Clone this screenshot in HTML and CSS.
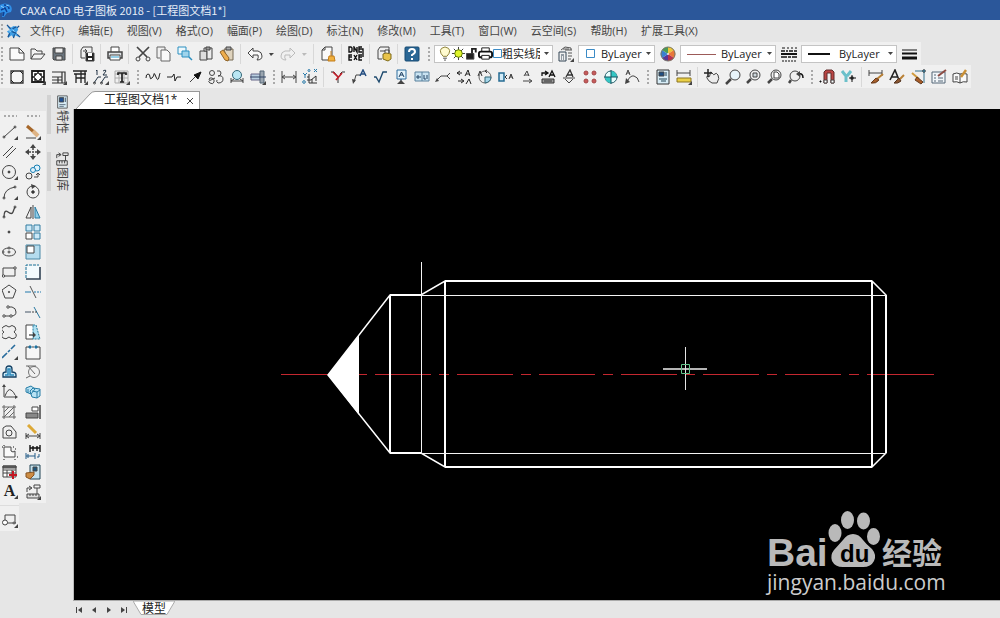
FILE: index.html
```html
<!DOCTYPE html>
<html lang="zh-CN">
<head>
<meta charset="utf-8">
<title>CAXA CAD 电子图板 2018 - [工程图文档1*]</title>
<link rel="stylesheet" href="styles.css">
</head>
<body>
<div class="app">
  <header class="titlebar">
    <svg class="logo" viewBox="0 0 13 16"><path d="M0 3q5-3 10 0 3 3 1 7l-4 1-3 4H2l1-5-3 1z" fill="#2f8fe8" stroke="none"/><path d="M4 3q5 0 5 4M1 8l4-2 2 4M3 14l1-4" stroke="#0d3f94" stroke-width="1.500"/><path d="M1 4l3 2M6 3l3 1" stroke="#8fd0ff"/></svg>
    <h1>CAXA CAD 电子图板 2018 - [工程图文档1*]</h1>
  </header>

  <nav class="menubar" aria-label="主菜单">
    <span class="grip"></span>
    <svg class="menu-logo" viewBox="0 0 16 16"><path d="M1 2l4 2 3-2 4 1 1 3-2 3 3 5-4-2-2 3-2-3-4 3 1-5-2-2 3-2z" fill="#3f9fe6" stroke="none"/><path d="M1 1l4 4M7 5l4-2M6 8l5 2M4 10l-2 4M9 11l-1 4M14 2l-2 2M12 11l3 3" stroke="#17508f" stroke-width="1.300"/><path d="M7 6l2 2M3 7l2 1" stroke="#a9dcff"/></svg>
    <button>文件(F)</button><button>编辑(E)</button><button>视图(V)</button><button>格式(O)</button><button>幅面(P)</button><button>绘图(D)</button><button>标注(N)</button><button>修改(M)</button><button>工具(T)</button><button>窗口(W)</button><button>云空间(S)</button><button>帮助(H)</button><button>扩展工具(X)</button>
  </nav>

  <div class="toolrow">
    <div class="toolbar" role="toolbar" aria-label="标准">
      <span class="grip"></span>
      <button aria-label="新建"><svg viewBox="0 0 16 16"><path d="M1 2h9l5 5v7H1z" fill="#fafafa"/><path d="M10 2v5h5"/></svg></button>
      <button aria-label="打开"><svg viewBox="0 0 16 16"><path d="M1 13V3h4l2 2h5v3M1 13l3-5h11l-4 5z" fill="#f4f4f4"/></svg></button>
      <button aria-label="保存"><svg viewBox="0 0 16 16"><path d="M2 2h12v12H3l-1-1z" fill="#6a747d"/><path d="M4 2h8v5H4z" fill="#eee"/><path d="M5 10h6v4H5z" fill="#ddd"/></svg></button>
      <span class="sep"></span>
      <button aria-label="另存为"><svg viewBox="0 0 16 16"><path d="M4 1h9v5M4 1L2 4v8h4"/><path d="M4 5h4M6 3l2 2-2 2"/><path d="M7 7h8v8H7z" fill="#222"/><path d="M9 7h4v3H9zM9 12h4v2H9z" fill="#fff" stroke="none"/></svg></button>
      <span class="sep"></span>
      <button aria-label="打印"><svg viewBox="0 0 16 16"><path d="M4 6V1h8v5" fill="#fff"/><path d="M1 6h14v6H1z" fill="#dfe3e6" stroke-width="1.500"/><path d="M3 9h10v5H3z" fill="#fff"/><path d="M4 11h8" stroke="#2f9fd0"/></svg></button>
      <span class="sep"></span>
      <button aria-label="剪切"><svg viewBox="0 0 16 16"><path d="M2 1l10 10M14 1L4 11" stroke-width="1.700"/><circle cx="3" cy="13" r="2"/><circle cx="13" cy="13" r="2"/></svg></button>
      <button aria-label="复制"><svg viewBox="0 0 16 16"><path d="M4 12H1V1h8v3" stroke="#666"/><path d="M5 4h6l3 3v8H5z" fill="#fafafa" stroke="#666"/></svg></button>
      <button aria-label="带基点复制"><svg viewBox="0 0 16 16"><path d="M1 1h8v7H1z" fill="#eef8fc" stroke="#2b8fc0"/><path d="M5 5h7v6H5z" fill="#9fd4ec" stroke="#2b8fc0"/><path d="M12 11l3 3" stroke="#2b8fc0" stroke-width="1.500"/></svg></button>
      <button aria-label="粘贴"><svg viewBox="0 0 16 16"><path d="M2 5v9h7V5z" fill="#ddd"/><path d="M6 2h8v11H9V5H6z" fill="#ececec"/><path d="M8 1h4v3H8z" fill="#999"/></svg></button>
      <button aria-label="选择性粘贴"><svg viewBox="0 0 16 16"><path d="M5 3h9v11H8z" fill="#dfd3bd" stroke="#776a55"/><path d="M1 6l3-2 6 8-1 3-3-1z" fill="#eead4c" stroke="#8f6428"/><path d="M7 1h5v3H7z" fill="#aaa"/></svg></button>
      <span class="sep"></span>
      <button aria-label="撤销"><svg viewBox="0 0 16 16"><path d="M1 7l5-5v3h5q4 1 4 5t-5 4q2-2 1-5H6v3z" fill="#fafafa"/></svg></button>
      <button class="drop" aria-label="撤销列表"><svg viewBox="0 0 8 8"><path class="c" d="M2 3h5L4 6z"/></svg></button>
      <button aria-label="重做"><svg viewBox="0 0 16 16"><path d="M15 7l-5-5v3H5q-4 1-4 5t5 4q-2-2-1-5h5v3z" stroke="#bbb"/></svg></button>
      <button class="drop" aria-label="重做列表"><svg viewBox="0 0 8 8"><path d="M2 3h5L4 6z" fill="#bbb" stroke="none"/></svg></button>
      <span class="sep"></span>
      <button aria-label="清理"><svg viewBox="0 0 16 16"><path d="M5 1h7v13H2V4zM5 1v3H2" fill="#fafafa"/><path d="M11 5v5M9 10h5l1 5H8z" fill="#f0b03e" stroke="#c37c18"/></svg></button>
      <span class="sep"></span>
      <button aria-label="外部程序"><svg viewBox="0 0 16 16"><path d="M1 1v5h2l1-1V2L3 1zM6 6V1l3 5V1M14 1h-3v5h3M11 3h3M4 9H1v5h3M1 11h3M6 9l3 5M9 9l-3 5M14 9h-3v5h3M11 11h3M14 3h1v8" stroke="#111" stroke-width="1.400"/></svg></button>
      <span class="sep"></span>
      <button aria-label="加密"><svg viewBox="0 0 16 16"><path d="M4 1h9v6M4 1L2 4v9h4M4 5h5"/><path d="M7 8l3-1 5 1v5l-3 2-5-2z" fill="#e8c34a" stroke="#806c1a"/><path d="M9 7V4h4v3"/></svg></button>
      <span class="sep"></span>
      <button aria-label="帮助"><svg viewBox="0 0 16 16"><rect x="1" y="1" width="14" height="14" rx="1" fill="#2a6795" stroke="#164a72"/><path d="M5 6q0-3 3-3t3 3q0 1-3 3v1M8 12v2" stroke="#fff" stroke-width="2"/></svg></button>
      <span class="grip wide"></span>
      <div class="combo layer">
        <svg viewBox="0 0 12 16"><path d="M4 11q-3-3-3-6t5-4q5 1 5 4t-3 6z" fill="#fffbd0" stroke="#877b30"/><path d="M4 13h4M5 15h2"/></svg>
        <svg class="i16" viewBox="0 0 16 16"><path d="M8 1v14M1 8h14M3 3l10 10M13 3L3 13" stroke="#333"/><circle cx="8" cy="8" r="4" fill="#dff52b" stroke="#5a7500"/></svg>
        <svg viewBox="0 0 12 16"><path d="M0 8h8v6H0z" fill="#222"/><path d="M6 8V3h4v4" stroke="#222" stroke-width="2"/></svg>
        <svg class="i16" viewBox="0 0 16 16"><path d="M4 6V2h8v4" fill="#fff" stroke="#111"/><rect x="1" y="6" width="14" height="6" rx="2" fill="#fff" stroke="#111" stroke-width="2"/><path d="M4 10h8v4H4z" fill="#fff" stroke="#111"/></svg>
        <svg class="i9" viewBox="0 0 9 9"><path d="M.5.500h8v8h-8z" stroke="#3b8bc6"/></svg>
        <select aria-label="图层"><option>粗实线层</option></select>
        <svg class="arrow" viewBox="0 0 8 8"><path class="c" d="M2 2h5L4.500 5z"/></svg>
      </div>
      <button aria-label="图层设置"><svg viewBox="0 0 16 16"><path d="M1 6h7v9H1zM3 9h3M3 11h1M5 11h1M3 13h1M5 13h1" stroke="#345"/><path d="M3 4l4-3 6 1v2M7 4h7M10 7h4M10 10h4M10 13h3M5 3h6" stroke="#555"/><path class="c" d="M16 12v4h-4z"/></svg></button>
      <div class="combo color">
        <svg class="i9" viewBox="0 0 9 9"><path d="M.5.500h8v8h-8z" stroke="#3b8bc6"/></svg>
        <select aria-label="颜色"><option>ByLayer</option></select>
        <svg class="arrow" viewBox="0 0 8 8"><path class="c" d="M2 2h5L4.500 5z"/></svg>
      </div>
      <button aria-label="颜色设置"><svg viewBox="0 0 16 16"><g stroke="none"><path d="M8 8V1a7 7 0 0 1 6 3z" fill="#ecc53a"/><path d="M8 8l6-4a7 7 0 0 1 0 8z" fill="#e8763a"/><path d="M8 8l6 4a7 7 0 0 1-6 3z" fill="#b82f4c"/><path d="M8 8v7a7 7 0 0 1-6-3z" fill="#5a3698"/><path d="M8 8l-6 4a7 7 0 0 1 0-8z" fill="#3a7fd0"/><path d="M8 8L2 4a7 7 0 0 1 6-3z" fill="#4a9a58"/><circle cx="8" cy="8" r="1" fill="#e6e6e6"/></g><circle cx="8" cy="8" r="7" stroke="#776"/></svg></button>
      <div class="combo linetype">
        <svg class="line" viewBox="0 0 30 16"><path d="M0 8.500h29" stroke="#9c5a58"/></svg>
        <select aria-label="线型"><option>ByLayer</option></select>
        <svg class="arrow" viewBox="0 0 8 8"><path class="c" d="M2 2h5L4.500 5z"/></svg>
      </div>
      <button aria-label="线型设置"><svg viewBox="0 0 16 16"><path d="M1 2h3M6 2h2M10 2h2M14 2h2M1 15h2M4 15h2M7 15h2M10 15h2M13 15h2" stroke="#111"/><path d="M0 5h4M5 5h2M8 5h4M13 5h3M0 11h6M7 11h3M11 11h5" stroke="#111" stroke-width="1.500"/><path d="M0 8h16" stroke="#111" stroke-width="2"/></svg></button>
      <div class="combo lineweight">
        <svg class="line short" viewBox="0 0 22 16"><path d="M0 8h22" stroke="#111" stroke-width="2"/></svg>
        <select aria-label="线宽"><option>ByLayer</option></select>
        <svg class="arrow" viewBox="0 0 8 8"><path class="c" d="M2 2h5L4.500 5z"/></svg>
      </div>
      <button aria-label="线宽设置"><svg viewBox="0 0 16 16"><path d="M0 4h15" stroke="#111"/><path d="M0 7.500h15" stroke="#111" stroke-width="2"/><path d="M0 12h15" stroke="#111" stroke-width="3"/></svg></button>
    </div>
  </div>

  <div class="toolrow second">
    <div class="toolbar" role="toolbar" aria-label="图幅与标注">
      <span class="grip"></span>
      <button aria-label="图幅设置"><svg viewBox="0 0 16 16"><path d="M2 2h12v12H2z" fill="#f6f6f6" stroke="#333" stroke-width="1.300"/><path d="M2 5l3-3M11 2l3 3M2 11l3 3M14 11l-3 3" stroke="#222"/></svg></button>
      <button aria-label="调入图框"><svg viewBox="0 0 16 16"><path d="M2 2h12v11H2z" fill="#fff" stroke="#222" stroke-width="1.800"/><path d="M5 7V5h2M9 5h2v2M5 9v2h2M9 11h2V9M8 2v3M8 11v2M2 8h3M11 8h3" stroke="#111" stroke-width="1.500"/><path class="c" d="M16 12v4h-4z"/></svg></button>
      <button aria-label="标题栏"><svg viewBox="0 0 16 16"><path d="M1 3h13v11H1M11 3v11M1 8h10M7 8v6M1 11h10" stroke="#333" stroke-width="1.200"/><path class="c" d="M16 12v4h-4z"/></svg></button>
      <button aria-label="参数栏"><svg viewBox="0 0 16 16"><path d="M1 2h14M2 5h12M4 5v9M9 2v12M13 2v12M4 9h9" stroke="#222" stroke-width="1.300"/><path class="c" d="M16 12v4h-4z"/></svg></button>
      <button aria-label="零件序号"><svg viewBox="0 0 16 16"><path d="M1 14l4-6h3M8 14l4-6h3M3 2l1-1v5M10 2q3-2 3 0l-3 4h4" stroke="#234"/><circle cx="1.500" cy="14" r="1"/><circle cx="8.500" cy="14" r="1"/><path class="c" d="M16 12v4h-4z"/></svg></button>
      <button aria-label="明细表"><svg viewBox="0 0 16 16"><path d="M1 2h13v12H1zM1 5h13M1 9h13M5 2v12M10 2v12" stroke="#aaa"/><path d="M4 6V4h8v2M8 4v9M6 13h4" stroke="#222" stroke-width="1.700"/><path class="c" d="M16 12v4h-4z"/></svg></button>
      <span class="grip mid"></span>
      <button aria-label="波浪线"><svg viewBox="0 0 16 16"><path d="M1 9q0-4 2-4t2 3 2 1 2-4 2 3 3 0 1-3" stroke="#222"/></svg></button>
      <button aria-label="双折线"><svg viewBox="0 0 16 16"><path d="M1 8h5l2-3 1 7 2-4h4" stroke="#222"/></svg></button>
      <button aria-label="箭头"><svg viewBox="0 0 16 16"><path d="M3 13l7-7"/><path d="M14 3l-3 7-4-4z" fill="#111" stroke="#111"/></svg></button>
      <button aria-label="云线"><svg viewBox="0 0 16 16"><circle cx="4" cy="4" r="2.500"/><path d="M9 2q4-1 4 2t-3 3q5-1 5 3t-5 4q-2-1-1-3M1 11q0-3 3-2t2 4-4 1 1-3l4-2"/></svg></button>
      <button aria-label="孔轴"><svg viewBox="0 0 16 16"><circle cx="8" cy="6" r="4.500" fill="#b9e6f3" stroke="#367"/><path d="M2 9v5M14 9v5M2 12h12M5 10l-3 2M11 10l3 2"/></svg></button>
      <button aria-label="局部放大"><svg viewBox="0 0 16 16"><path d="M1 5h9v6H1z" fill="#b9cfe0" stroke="#668"/><path d="M10 2h4v12h-4z" fill="#9aa5b0" stroke="#567"/><path d="M0 8h16" stroke="#346"/><path class="c" d="M16 12v4h-4z"/></svg></button>
      <span class="grip mid"></span>
      <button aria-label="线性标注"><svg viewBox="0 0 16 16"><path d="M1 2v12M15 2v12M1 8h14M4 6L1 8l3 2M12 6l3 2-3 2" stroke="#444"/></svg></button>
      <button aria-label="坐标标注"><svg viewBox="0 0 16 16"><path d="M7 5v9h8M9 11l5-4M7 8h-2M10 10v4M14 7v5M5 11h4" stroke="#333"/><path d="M1 4l2 2 2-2M3 6v3M12 0l3 3M15 0l-3 3" stroke="#2879a8"/><circle cx="7" cy="1.500" r="1" stroke="#2879a8"/><circle cx="2" cy="13" r="1.300" stroke="#2879a8"/></svg></button>
      <span class="sep"></span>
      <button aria-label="倒角标注"><svg viewBox="0 0 16 16"><path d="M1 3h3l4 5v6M10 5l2-2h3" stroke="#333"/><path d="M3 3l5 5M6 11l6-7" stroke="#c2202b" stroke-width="1.700"/></svg></button>
      <button aria-label="引出说明"><svg viewBox="0 0 16 16"><path d="M3 13l2-7h4"/><path class="c" d="M1 10l1 5 3-4z"/><path d="M9 7l3-6 3 6M10 5h4" stroke="#234d80" stroke-width="1.500"/></svg></button>
      <button aria-label="粗糙度"><svg viewBox="0 0 16 16"><path d="M2 8h2l3 5 4-10h4" stroke="#1e4a6e" stroke-width="1.400"/></svg></button>
      <button aria-label="基准代号"><svg viewBox="0 0 16 16"><path d="M4 1h9v9H4z" fill="#e6f4fb" stroke="#2d6c9e"/><path d="M6 8l2.500-5L11 8M7 6h3M8 10v3" stroke="#1b3c60"/><path class="c" d="M4 15l4-4 4 4z"/></svg></button>
      <button aria-label="形位公差"><svg viewBox="0 0 16 16"><path d="M1 3h14v9H1zM8 3v9" fill="#c9e3f2" stroke="#58809c"/><path d="M2 8h5M4 6v4M10 6v4h2M13 6v4" stroke="#246"/></svg></button>
      <button aria-label="焊接符号"><svg viewBox="0 0 16 16"><path d="M1 12l5-5h6M15 4l-3 3 3 3" stroke="#444"/><path class="c" d="M0 13l2-4 2 3z"/></svg></button>
      <button aria-label="剖切符号"><svg viewBox="0 0 16 16"><path d="M1 4h5M2 12h5M4 2L1 4l3 2M5 10l3 2-3 2" stroke="#222"/><path d="M9 7l3-6 2 6M10 5h3M10 15l3-5 2 5" stroke="#222"/></svg></button>
      <button aria-label="向视符号"><svg viewBox="0 0 16 16"><circle cx="8" cy="8" r="6" stroke="#666"/><path d="M8 8h6q0 5-6 6z" fill="#a5d6ea" stroke="#367"/><path d="M1 7l2-5 2 5M8 2l2-1M8 2l2 2" stroke="#333"/></svg></button>
      <button aria-label="中心孔"><svg viewBox="0 0 16 16"><path d="M1 4h5v8H1z" fill="#d2ebf7" stroke="#246b92" stroke-width="1.500"/><path d="M9 6L7 8l2 2M11 10l2-5 2 5M12 8h2" stroke="#333"/></svg></button>
      <button aria-label="技术要求"><svg viewBox="0 0 16 16"><path d="M5 7l3-5 2 5M6 6h4M4 12h8M10 10l3 2-3 2" stroke="#444"/></svg></button>
      <button aria-label="标注编辑"><svg viewBox="0 0 16 16"><path d="M2 10h12v4H2zM4 12h8" fill="#999" stroke="#333"/><path d="M2 7V4h5M5 2l3 2-3 2M9 8l3-6 3 6M10 6h4" stroke="#111" stroke-width="1.300"/></svg></button>
      <button aria-label="文字标注"><svg viewBox="0 0 16 16"><path d="M5 8l4-7 3 7M6 6h6" stroke="#333" stroke-width="1.300"/><path d="M2 9h12M4 10l4 4 4-4" stroke="#444"/></svg></button>
      <button aria-label="孔标注"><svg viewBox="0 0 16 16"><g fill="#c65a5a" stroke="#a34646"><circle cx="4" cy="4" r="2"/><circle cx="12" cy="4" r="2"/><circle cx="4" cy="12" r="2"/><circle cx="12" cy="12" r="2"/></g></svg></button>
      <button aria-label="圆心标记"><svg viewBox="0 0 16 16"><circle cx="8" cy="8" r="6" fill="#e8ffff" stroke="#28606c"/><path d="M8 8V2a6 6 0 0 1 6 6zM8 8v6a6 6 0 0 1-6-6z" fill="#33c6c4" stroke="none"/><path d="M8 1v14M1 8h14" stroke="#145560"/></svg></button>
      <button aria-label="弧长标注"><svg viewBox="0 0 16 16"><path d="M2 6l2-5 2 5M3 4h3M3 13q3-7 7-6t5 6"/><path class="c" d="M1 15l1-6 4 4z"/></svg></button>
      <span class="grip mid"></span>
      <button aria-label="特性"><svg viewBox="0 0 16 16"><path d="M2 1h12v14H2z" fill="#d8edf7" stroke="#333"/><path d="M4 3h5v4H4z" fill="#1f4f83"/><path d="M11 3v4M4 10h8M6 12h5" stroke="#245"/></svg></button>
      <button aria-label="测量"><svg viewBox="0 0 16 16"><path d="M1 1v6M14 1v6M1 4h13"/><path d="M1 9h14v4H1z" fill="#ead047" stroke="#8b7522"/><path class="c" d="M16 12v4h-4z"/></svg></button>
      <span class="sep"></span>
      <button aria-label="平移"><svg viewBox="0 0 16 16"><path d="M5 8q-3-2-2 1t5 5h5q3-5 1-8t-3-1-3-1-2 2z" fill="#ececec"/><path d="M4 0v8M0 4h8" stroke="#222" stroke-width="1.500"/></svg></button>
      <button aria-label="窗口缩放"><svg viewBox="0 0 16 16"><circle cx="10" cy="6" r="5" fill="#e7f4fa"/><path d="M6 10l-5 5" stroke-width="2.500"/></svg></button>
      <button aria-label="显示全部"><svg viewBox="0 0 16 16"><circle cx="9" cy="6" r="5"/><path d="M5 10l-4 4" stroke-width="2.500"/><path d="M7 4h4v4H7z" fill="#cdd7dc"/></svg></button>
      <button aria-label="显示窗口"><svg viewBox="0 0 16 16"><circle cx="9" cy="6" r="5"/><path d="M5 10l-4 4" stroke-width="2.500"/><path d="M7 3h3l2 2v4H7z" fill="#fff"/></svg></button>
      <button aria-label="显示上一步"><svg viewBox="0 0 16 16"><circle cx="7" cy="7" r="5"/><path d="M3 11l-2 3" stroke-width="2.500"/><path d="M11 5q4-1 4 4" stroke="#111" stroke-width="1.500"/><path class="c" d="M8 5l4-3v6z"/></svg></button>
      <span class="grip mid"></span>
      <button aria-label="捕捉"><svg viewBox="0 0 16 16"><path d="M5 14V3l2-2h6l2 2v11h-3V4H8v10z" fill="#b94543" stroke="#612c2c"/><path d="M5 11h3v3H5zM12 11h3v3h-3z" fill="#fff"/><path d="M1 12h1v1H1z" fill="#111" stroke="#111"/></svg></button>
      <button aria-label="三视图导航"><svg viewBox="0 0 16 16"><path d="M2 2l4 5v6M11 2L7 7" stroke="#6bc0ca" stroke-width="3"/><path d="M12 6v7M9 9h7" stroke="#111"/><circle cx="12" cy="9" r="1.500" fill="#111"/></svg></button>
      <span class="sep"></span>
      <button aria-label="标注样式"><svg viewBox="0 0 16 16"><path d="M1 1v6M14 1v6M1 4h13"/><path d="M15 5l-6 5" stroke="#b98035" stroke-width="2"/><path d="M8 9l3 2q-3 4-8 3z" fill="#a75f2c" stroke="#653b1e"/></svg></button>
      <button aria-label="文本样式"><svg viewBox="0 0 16 16"><path d="M1 11L6 1l4 10M3 8h6" stroke="#222" stroke-width="1.600"/><path d="M15 6l-4 4" stroke="#b98035" stroke-width="2"/><path d="M10 9l2 3q-3 3-7 2z" fill="#8b5731" stroke="#553520"/></svg></button>
      <button aria-label="点样式"><svg viewBox="0 0 16 16"><path d="M14 14V2H5" stroke="#35708c"/><path d="M2 4l7 6" stroke="#d09b3f" stroke-width="2"/><path d="M7 8l6 5-2 2-6-4z" fill="#a85c28" stroke="#623c21"/><circle cx="14" cy="2" r="1.300" fill="#34a9de"/></svg></button>
      <button aria-label="样式管理"><svg viewBox="0 0 16 16"><path d="M1 3h13v11H1zM3 6h2M3 9h2M3 12h2M7 9h5M7 12h5" fill="#f2f6f9" stroke="#567"/><path d="M15 1L7 7" stroke="#8d4b43" stroke-width="2"/></svg></button>
      <button aria-label="图库"><svg viewBox="0 0 16 16"><path d="M8 5q-3-2-7 0v8q4-1 7 1 3-2 7-1V5q-4-1-7 0zM8 5v9M3 8h3M3 10h3" fill="#fafafa"/><path d="M14 1l-5 7" stroke="#c99036" stroke-width="2.500"/></svg></button>
    </div>
  </div>

  <div class="workspace">
    <aside class="palettes">
      <div class="palette draw" role="toolbar" aria-label="绘图工具">
        <span class="hgrip"></span>
        <button aria-label="直线"><svg viewBox="0 0 16 16"><path d="M2 13L13 3"/><circle cx="2" cy="13" r="1"/><circle cx="13" cy="3" r="1"/><path class="c" d="M16 12v4h-4z"/></svg></button>
        <button aria-label="平行线"><svg viewBox="0 0 16 16"><path d="M1 12L11 2M4 14L14 4"/></svg></button>
        <button aria-label="圆"><svg viewBox="0 0 16 16"><circle cx="7" cy="8" r="6.500"/><circle cx="7" cy="8" r="1" fill="#222"/><path class="c" d="M16 12v4h-4z"/></svg></button>
        <button aria-label="圆弧"><svg viewBox="0 0 16 16"><path d="M2 14Q2 5 13 3"/><circle cx="2" cy="14" r="1"/><circle cx="13" cy="3" r="1"/><path class="c" d="M16 12v4h-4z"/></svg></button>
        <button aria-label="样条"><svg viewBox="0 0 16 16"><path d="M2 13q0-8 4-5t5 0 2-5" stroke-width="1.300"/><circle cx="2" cy="13" r="1"/><circle cx="13" cy="3" r="1"/></svg></button>
        <button aria-label="点"><svg viewBox="0 0 16 16"><circle cx="7" cy="8" r="1" fill="#333"/></svg></button>
        <button aria-label="椭圆"><svg viewBox="0 0 16 16"><ellipse cx="7" cy="8" rx="6.500" ry="4"/><circle cx="7" cy="4" r="1" fill="#fff"/><circle cx="7" cy="8" r="1"/><circle cx="1" cy="8" r="1" fill="#fff"/></svg></button>
        <button aria-label="矩形"><svg viewBox="0 0 16 16"><path d="M1 4h12v8H1z"/><circle cx="13" cy="4" r="1.200" fill="#fff"/><circle cx="1.500" cy="12" r="1.200" fill="#fff"/></svg></button>
        <button aria-label="正多边形"><svg viewBox="0 0 16 16"><path d="M7 1l7 5-3 8H3L0 6z"/><circle cx="7" cy="8" r=".7"/></svg></button>
        <button aria-label="多段线"><svg viewBox="0 0 16 16"><path d="M6 3h4q4 1 4 5t-5 4H2"/><circle cx="6" cy="3" r="1.200" fill="#fff"/><circle cx="2" cy="12" r="1.200" fill="#fff"/><circle cx="9" cy="12" r="1.200" fill="#fff"/></svg></button>
        <button aria-label="云线"><svg viewBox="0 0 16 16"><path d="M7 3q3-3 6 0 2 3-1 5 4 3 1 6-3 2-6-1-3 3-6 1-3-3 1-6-4-2-1-5 3-3 6 0z"/></svg></button>
        <button aria-label="中心线"><svg viewBox="0 0 16 16"><path d="M0 14l5-5M6 8l2-2M9 5l4-4" stroke="#286c9d" stroke-width="1.600"/><path class="c" d="M16 12v4h-4z"/></svg></button>
        <button aria-label="等距线"><svg viewBox="0 0 16 16"><path d="M1 13v-3q0-2 3-2V5q0-3 3-3t3 3v3q4 0 4 3v2z" fill="#cce8f5" stroke="#123f63" stroke-width="1.300"/><path d="M3 11h3V5h2v6h4" stroke="#2a87b9" stroke-width="1.500"/></svg></button>
        <button aria-label="公式曲线"><svg viewBox="0 0 16 16"><path d="M2 2v11h12M3 12q3-8 6-6t4 5"/><path class="c" d="M0 3l2-3 2 3zM13 11l3 2-3 2z"/></svg></button>
        <button aria-label="剖面线"><svg viewBox="0 0 16 16"><path d="M2 1v14M12 1v14M0 3h14M0 13h14M2 8l5-5M2 13L12 3M7 13l5-5" stroke="#666"/></svg></button>
        <button aria-label="填充"><svg viewBox="0 0 16 16"><path d="M1 14V4l3-2h5l5 6v6z"/><circle cx="7" cy="9" r="3"/></svg></button>
        <button aria-label="局部视图"><svg viewBox="0 0 16 16"><path d="M2 13V3h7v4q2 2 4 0v6z" fill="#f9f9f9"/><path d="M0 3h1M2 1v1M11 3h1M13 5h1M15 13h1M2 15v1M13 15v1" stroke="#111"/></svg></button>
        <button aria-label="表格"><svg viewBox="0 0 16 16"><path d="M1 2h13v11H1zM1 6h13M1 9h13M5 6v7M10 6v7" fill="#fff"/><path d="M1 2h13v2H1z" fill="#666"/><path d="M11 7v8M7 11h8" stroke="#c31622" stroke-width="2"/></svg></button>
        <button class="letter" aria-label="文字">A<svg class="corner" viewBox="0 0 4 4"><path class="c" d="M4 0v4H0z"/></svg></button>
        <hr>
        <button aria-label="块"><svg viewBox="0 0 16 16"><path d="M3 8V3h10v8M5 11h9"/><circle cx="3" cy="10.500" r="2.500" fill="#fff"/><circle cx="12" cy="11" r="1" fill="#fff"/><path class="c" d="M16 12v4h-4z"/></svg></button>
      </div>
      <div class="palette edit" role="toolbar" aria-label="编辑工具">
        <span class="hgrip"></span>
        <button aria-label="删除"><svg viewBox="0 0 16 16"><path d="M2 2l7 6" stroke="#a6672a" stroke-width="3"/><path d="M8 7l5 5" stroke="#dfb485" stroke-width="4"/><path d="M1 14h10"/><path class="c" d="M16 12v4h-4z"/></svg></button>
        <button aria-label="平移"><svg viewBox="0 0 16 16"><path d="M8 2v4M8 10v4M2 8h4M10 8h4" stroke-width="1.500"/><path class="c" d="M5 4l3-4 3 4zM5 12l3 4 3-4zM4 5L0 8l4 3zM12 5l4 3-4 3z"/><path d="M7 8h2M8 7v2"/></svg></button>
        <button aria-label="平移复制"><svg viewBox="0 0 16 16"><circle cx="12" cy="4" r="3" fill="#def2fc" stroke="#167eb3"/><circle cx="8" cy="6" r="2.500" fill="#def2fc" stroke="#167eb3"/><circle cx="4" cy="12" r="3"/><path d="M9 13h4v-3M11 11l2-2 2 2"/></svg></button>
        <button aria-label="旋转"><svg viewBox="0 0 16 16"><circle cx="8" cy="8" r="6"/><circle cx="8" cy="8" r="1.300" fill="#222"/><path class="c" d="M6 0l5 2-4 3z"/></svg></button>
        <button aria-label="镜像"><svg viewBox="0 0 16 16"><path d="M6 3v11H1z"/><path d="M10 3v11h5z" fill="#90cce7" stroke="#287da4"/><path d="M8 1v14"/></svg></button>
        <button aria-label="阵列"><svg viewBox="0 0 16 16"><path d="M1 1h6v6H1zM9 1h6v6H9zM9 9h6v6H9z" fill="#cbe8f7" stroke="#327ca1"/><path d="M1 9h6v6H1z" fill="#fff"/></svg></button>
        <button aria-label="缩放"><svg viewBox="0 0 16 16"><path d="M15 1v14H1V1z" fill="#b5dcee" stroke="#4a89a7"/><path d="M2 2h7v7H2z" fill="#fff"/></svg></button>
        <button aria-label="拉伸"><svg viewBox="0 0 16 16"><path d="M1 14V1h13" stroke="#18739a" stroke-dasharray="3 1"/><path d="M2 2h12v12H2z" fill="#f3fafd" stroke="none"/><path d="M15 3v12H1" stroke="#345" stroke-width="1.600"/></svg></button>
        <button aria-label="裁剪"><svg viewBox="0 0 16 16"><path d="M5 2l6 12" stroke="#555"/><path d="M0 8h6" stroke="#2179ac"/><path d="M9 8h7" stroke-dasharray="2 1" stroke="#2179ac"/></svg></button>
        <button aria-label="延伸"><svg viewBox="0 0 16 16"><path d="M9 3l6 11" stroke="#2879a2"/><path d="M0 8h6" stroke="#456"/><path d="M7 8h5" stroke-dasharray="2 1"/></svg></button>
        <button aria-label="拉伸对象"><svg viewBox="0 0 16 16"><path d="M8 1H1v14h7" fill="#fff"/><path d="M8 1h3l4 14H8z" fill="#ade0f2" stroke="#25799a" stroke-dasharray="2 1"/><path d="M4 11h5" stroke="#111"/><path class="c" d="M8 8l3 3-3 3z"/></svg></button>
        <button aria-label="打断"><svg viewBox="0 0 16 16"><path d="M4 3H1v12h14V3h-3M7 3h2" fill="#f6f6f6"/><path d="M4 2h2v2H4zM10 2h2v2h-2z" fill="#1f719e" stroke="#1f719e"/></svg></button>
        <button aria-label="圆角"><svg viewBox="0 0 16 16"><circle cx="9" cy="8" r="5.500" stroke="#777"/><path d="M1 2h10M3 2l7 8M1 14l4-2" stroke="#666"/></svg></button>
        <button aria-label="分解"><svg viewBox="0 0 16 16"><path d="M1 4l5-2 4 3-4 5-5-2zM5 7l3-3 7 1v7l-3 2-5-1z" fill="#b9e3f4" stroke="#267da6"/><path d="M7 7l5 1 3-2M12 8v6M3 5v4" stroke="#267da6"/></svg></button>
        <button aria-label="对齐"><svg viewBox="0 0 16 16"><path d="M15 1v14" stroke-width="1.500"/><path d="M7 3h6v4H7z" fill="#fff"/><path d="M1 9h12v5H1z" fill="#888"/></svg></button>
        <button aria-label="标注编辑"><svg viewBox="0 0 16 16"><path d="M1 9v6M15 9v6M1 12h14M4 10l-3 2 3 2M12 10l3 2-3 2"/><path d="M3 1l8 8" stroke="#dda937" stroke-width="3"/></svg></button>
        <button aria-label="标注关联"><svg viewBox="0 0 16 16"><path d="M5 1v7M15 1v7M5 4h10M8 2v5M12 2v5" stroke="#111" stroke-width="1.400"/><path d="M1 9v6M10 9v6M1 12h9M3 10v4M12 13h2v-3" stroke="#245c88"/></svg></button>
        <button aria-label="特性匹配"><svg viewBox="0 0 16 16"><path d="M5 1h10v14H5z" fill="#c6e2ed" stroke="#245"/><path d="M8 3h4v4H8z" fill="#1c567c"/><path d="M1 9l8-1v3l-4 4-4-2z" fill="#cc8c43" stroke="#855322"/></svg></button>
        <button aria-label="图符"><svg viewBox="0 0 16 16"><path d="M2 10h12v4H2zM5 10v2M8 10v2M11 10v2" fill="#ddd"/><path d="M2 8V4h4M4 2l3 2-3 2M9 1h6v3H9zM12 4v6" stroke="#444"/><path class="c" d="M16 12v4h-4z"/></svg></button>
      </div>
    </aside>

    <aside class="dock">
      <button class="dock-tab"><svg viewBox="0 0 16 16"><path d="M3 1h11v14H3z" fill="#d8edf7" stroke="#555"/><path d="M5 3h5v5H5z" fill="#1f4f93"/><path d="M12 3v5M5 11h7M5 13h5" stroke="#567"/></svg><span>特性</span></button>
      <button class="dock-tab"><svg viewBox="0 0 16 16"><path d="M2 10h12v5H2zM5 10v3M8 10v3M11 10v3M2 7V3h4M4 1l3 2-3 2M9 1h6v3H9zM12 4v6" stroke="#333"/></svg><span>图库</span></button>
    </aside>

    <main class="document">
      <div class="filetabs">
        <div class="filetab">
          <svg class="tab-edge" viewBox="0 0 20 18"><path d="M1 18L15 3q2-2.500 5-2.500V18z" fill="#fff" stroke="none"/><path d="M1 18L15 3q2-2.500 5-2.500" stroke="#999"/></svg>
          <span class="tab-name">工程图文档1*</span>
          <button class="close" aria-label="关闭"><svg viewBox="0 0 8 8"><path d="M1 1l6 6M7 1L1 7" stroke="#444"/></svg></button>
        </div>
      </div>

      <div class="canvas">
        <svg viewBox="74 109 926 491" preserveAspectRatio="xMinYMin meet" role="img" aria-label="零件图">
          <g stroke="#c4272f">
            <path d="M281 374.500h68M357 374.500h10"/>
            <path d="M375 374.500h492" stroke-dasharray="56 8 10 8"/>
            <path d="M867 374.500h67"/>
          </g>
          <path d="M328 375L359 335V415z" fill="#fff" stroke="none"/>
          <g stroke="#fff" stroke-width="2">
            <path d="M328 375L390 295H421L445 281H872L886 295V453L872 467H445L421 453H390z" stroke-width="1.500"/>
            <path d="M390 295V453M445 281V467M872 281V467M886 295V453M390 295H421M390 453H421M445 281H872M445 467H872"/>
          </g>
          <path d="M421.500 262V453M421 295.500H886M421 453.500H886" stroke="#f4f4f4"/>
          <path d="M663 369H707" stroke="#b4b4b4" stroke-width="2"/>
          <path d="M685.500 347V390" stroke="#e4e4e4"/>
          <path d="M681.500 364.500h8v9h-8z" stroke="#63c48a"/>
          <g class="watermark">
            <ellipse cx="835" cy="533" rx="6.500" ry="9"/><ellipse cx="847.500" cy="520" rx="6.500" ry="9"/><ellipse cx="863.500" cy="521" rx="6.500" ry="8.500"/><ellipse cx="873.500" cy="536.500" rx="6.500" ry="8.500"/>
            <path d="M853 534q6 0 10 6 3 4 9 9 5 6 2 12-3 6-11 6h-20q-8 0-11-6-2-6 2-11l9-10q4-6 10-6z"/>
            <text class="bai" x="767" y="566">Bai</text>
            <text class="du" x="840" y="562">du</text>
            <text class="jingyan" x="882" y="564">经验</text>
            <text class="url" x="767" y="590">jingyan.baidu.com</text>
          </g>
        </svg>
      </div>

      <div class="sheets">
        <button aria-label="首页"><svg viewBox="0 0 8 8"><path class="c" d="M7 1v6L3 4z"/><path d="M1.500 1v6"/></svg></button>
        <button aria-label="上一页"><svg viewBox="0 0 8 8"><path class="c" d="M6 1v6L2 4z"/></svg></button>
        <button aria-label="下一页"><svg viewBox="0 0 8 8"><path class="c" d="M2 1v6l4-3z"/></svg></button>
        <button aria-label="末页"><svg viewBox="0 0 8 8"><path class="c" d="M1 1v6l4-3z"/><path d="M6.500 1v6"/></svg></button>
        <button class="sheet"><svg viewBox="0 0 42 14"><path d="M0 0l8 13.500h26L42 0z" fill="#fff" stroke="#aaa"/></svg><span>模型</span></button>
      </div>
    </main>
  </div>
</div>
</body>
</html>
```
FILE: styles.css
```css
* { box-sizing: border-box; }

body {
  margin: 0;
  background: #e6e6e6;
  color: #444;
  font-family: "Open Sans", "Noto Sans CJK SC", sans-serif;
  font-size: 12px;
}

button {
  display: flex;
  align-items: center;
  justify-content: center;
  margin: 0;
  padding: 0;
  border: 0;
  background: none;
  color: inherit;
  font: inherit;
}

svg {
  display: block;
  flex: none;
  fill: none;
  stroke: #444;
}

.c { fill: #444; stroke: none; }

.app {
  display: flex;
  flex-direction: column;
  min-height: 100vh;
}

.titlebar {
  display: flex;
  align-items: center;
  gap: 7px;
  height: 20px;
  background: #2b579a;
  color: #e8eef7;
}
.titlebar h1 {
  margin: 0;
  font-family: "Noto Sans CJK SC", sans-serif;
  font-size: 11px;
  font-weight: 400;
  line-height: 20px;
  white-space: nowrap;
}
.logo { width: 13px; height: 16px; }

.menubar {
  display: flex;
  align-items: center;
  height: 22px;
}
.menubar button {
  margin-right: 14px;
  font-size: 11px;
  line-height: 20px;
  white-space: nowrap;
}
.menu-logo { width: 15px; height: 15px; margin-right: 9px; }

.toolrow {
  display: flex;
  align-items: flex-start;
  height: 23px;
}
.toolrow.second { height: 24px; }
.toolbar {
  display: flex;
  align-items: center;
  height: 23px;
  padding-right: 1px;
  background: #f0f0f0;
}
.toolbar button { width: 21px; height: 22px; }
.toolbar svg { width: 16px; height: 16px; }
.toolbar .drop { width: 12px; }
.toolbar .drop svg { width: 8px; height: 8px; }

.grip {
  width: 6px;
  height: 16px;
  flex: none;
  background: radial-gradient(circle, #aaa 1px, transparent 1px) 0 0 / 4px 4px repeat-y;
}
.grip.mid { width: 10px; background-position-x: 4px; }
.grip.wide { width: 12px; background-position-x: 5px; }

.sep {
  width: 1px;
  height: 20px;
  margin: 0 3px;
  background: #d8d8d8;
}

.combo {
  display: flex;
  align-items: center;
  height: 18px;
  border: 1px solid #c4c4c4;
  background: #fff;
}
.combo + button,
button + .combo { margin-left: 2px; }
.combo select {
  flex: 1;
  min-width: 0;
  height: 16px;
  padding: 0;
  border: 0;
  appearance: none;
  background: none;
  color: #222;
  font: inherit;
  font-size: 11px;
  line-height: 16px;
}
.toolbar .combo svg { width: 12px; height: 15px; }
.toolbar .combo .i16 { width: 15px; height: 15px; }
.toolbar .combo .i9 { width: 9px; height: 9px; }
.toolbar .combo .arrow { width: 8px; height: 8px; margin: 0 2px; }
.toolbar .combo .line { width: 30px; height: 16px; margin-right: 4px; }
.toolbar .combo .short { width: 22px; margin-right: 9px; }
.layer { width: 119px; padding-left: 4px; }
.color { width: 77px; padding-left: 7px; }
.color select { margin-left: 6px; }
.linetype, .lineweight { width: 96px; padding-left: 6px; }

.workspace { display: flex; flex: 1; }

.palettes {
  display: flex;
  align-items: flex-start;
  width: 47px;
  padding-top: 22px;
}
.palette { padding-bottom: 2px; background: #f0f0f0; }
.palette button { position: relative; width: 100%; height: 20px; }
.palette svg { width: 16px; height: 16px; margin-top: 1px; }
.draw { width: 19px; }
.edit { width: 27px; }
.palette hr {
  height: 1px;
  margin: 4px 0 3px;
  border: 0;
  background: #ddd;
}
.hgrip {
  display: block;
  width: 14px;
  height: 10px;
  margin: 0 auto;
  background: radial-gradient(circle, #aaa 1px, transparent 1px) 0 3px / 4px 4px repeat-x;
}
.palette .letter {
  color: #222;
  font-family: "Liberation Serif", serif;
  font-size: 16px;
  font-weight: 700;
}
.palette .corner {
  position: absolute;
  right: 1px;
  bottom: 2px;
  width: 4px;
  height: 4px;
}

.dock {
  display: flex;
  flex-direction: column;
  align-items: flex-start;
  gap: 18px;
  width: 26px;
  padding-top: 6px;
}
.dock-tab {
  flex-direction: column;
  justify-content: flex-start;
  gap: 1px;
  width: 22px;
  height: 39px;
  padding-left: 4px;
  border-left: 4px solid #d2d2d2;
}
.dock-tab svg { width: 14px; height: 14px; }
.dock-tab span {
  font-size: 12px;
  line-height: 14px;
  writing-mode: vertical-rl;
  text-orientation: sideways;
}

.document {
  display: flex;
  flex: 1;
  flex-direction: column;
  min-width: 0;
}
.filetabs {
  display: flex;
  align-items: flex-end;
  height: 20px;
  padding-left: 2px;
}
.filetab {
  display: flex;
  align-items: center;
  height: 18px;
}
.tab-edge { width: 20px; height: 18px; }
.tab-name {
  height: 18px;
  padding-left: 9px;
  border-top: 1px solid #999;
  background: #fff;
  color: #222;
  font-size: 12px;
  line-height: 16px;
  white-space: nowrap;
}
.close {
  width: 23px;
  height: 18px;
  padding-left: 3px;
  border-top: 1px solid #999;
  border-right: 1px solid #999;
  background: #fff;
}
.close svg { width: 8px; height: 8px; }

.canvas {
  flex: 1;
  border-left: 1px solid #bbb;
  background: #000;
}
.canvas svg { width: 100%; }

.watermark { fill: #b9b9b9; stroke: none; }
.bai { font: 700 39px "Liberation Sans", sans-serif; }
.du { font: 700 24px "Liberation Sans", sans-serif; fill: #000; }
.jingyan { font: 700 30px "Noto Sans CJK SC", sans-serif; }
.url { font: 500 21px "Open Sans", sans-serif; fill: #ccc; }

.sheets {
  display: flex;
  align-items: center;
  height: 18px;
  border-top: 1px solid #aaa;
}
.sheets button {
  justify-content: flex-start;
  width: 15px;
  height: 17px;
  padding-left: 2px;
}
.sheets svg { width: 8px; height: 8px; }
.sheets .sheet {
  display: grid;
  align-self: flex-start;
  width: 42px;
  height: 14px;
  padding: 0;
  color: #222;
  font-size: 12px;
  line-height: 13px;
}
.sheet > * { grid-area: 1 / 1; }
.sheets .sheet svg { width: 42px; height: 14px; }
.sheet span { justify-self: center; }
```
